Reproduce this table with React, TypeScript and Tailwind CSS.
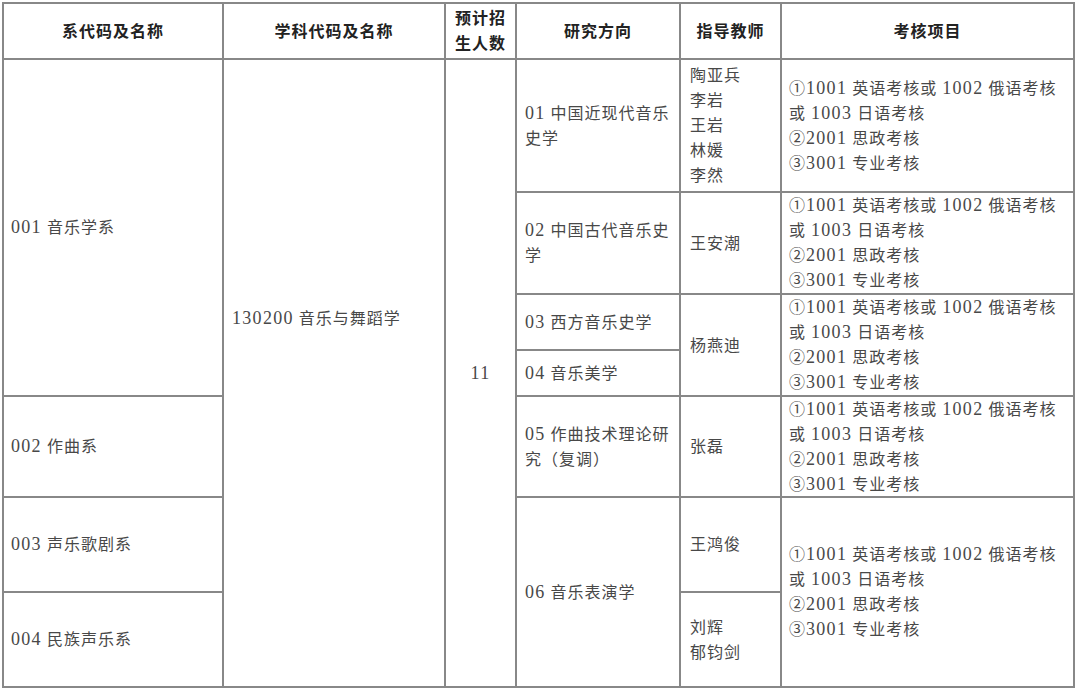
import React from "react";

const exam = [
  "①1001 英语考核或 1002 俄语考核",
  "或 1003 日语考核",
  "②2001 思政考核",
  "③3001 专业考核",
];

// digits in the source are set larger than the CJK characters
function T({ s }: { s: string }) {
  const parts = s.split(/([0-9]+)/);
  return (
    <>
      {parts.map((p, i) =>
        /^[0-9]+$/.test(p) ? (
          <span key={i} className="text-[18px] tracking-[1.3px]">
            {p}
          </span>
        ) : (
          <React.Fragment key={i}>{p}</React.Fragment>
        )
      )}
    </>
  );
}

function Lines({ lines }: { lines: string[] }) {
  return (
    <>
      {lines.map((l, i) => (
        <div key={i} className="whitespace-nowrap">
          <T s={l} />
        </div>
      ))}
    </>
  );
}

function Cell({
  className = "",
  children,
}: {
  className?: string;
  children?: React.ReactNode;
}) {
  return (
    <div className={`bg-white flex flex-col justify-center ${className}`}>
      {children}
    </div>
  );
}

const head = "items-center font-bold text-[#222] tracking-[1px]";

export default function App() {
  return (
    <div
      className="w-[1080px] h-[694px] bg-white pt-[2px] pl-[2px]"
      style={{ fontFamily: '"Liberation Serif", "Noto Sans CJK SC", serif' }}
    >
      <div className="grid w-[1073px] grid-cols-[218px_220px_69px_162px_99px_291px] grid-rows-[54px_131px_100px_54px_44px_99px_93px_93px] gap-[2px] bg-[#888888] p-[2px] text-[16px] leading-[25px] text-[#484848] tracking-[1px]">
        {/* header */}
        <Cell className={head}>系代码及名称</Cell>
        <Cell className={head}>学科代码及名称</Cell>
        <Cell className={head}>
          <div>预计招</div>
          <div>生人数</div>
        </Cell>
        <Cell className={head}>研究方向</Cell>
        <Cell className={head}>指导教师</Cell>
        <Cell className={head}>考核项目</Cell>

        {/* column 1 */}
        <Cell className="col-start-1 row-start-2 row-span-4 pl-[7px]">
          <Lines lines={["001 音乐学系"]} />
        </Cell>
        <Cell className="col-start-1 row-start-6 pl-[7px]">
          <Lines lines={["002 作曲系"]} />
        </Cell>
        <Cell className="col-start-1 row-start-7 pl-[7px]">
          <Lines lines={["003 声乐歌剧系"]} />
        </Cell>
        <Cell className="col-start-1 row-start-8 pl-[7px]">
          <Lines lines={["004 民族声乐系"]} />
        </Cell>

        {/* column 2 */}
        <Cell className="col-start-2 row-start-2 row-span-7 pl-[8px] pb-[110px]">
          <Lines lines={["130200 音乐与舞蹈学"]} />
        </Cell>

        {/* column 3 */}
        <Cell className="col-start-3 row-start-2 row-span-7 items-center">
          <Lines lines={["11"]} />
        </Cell>

        {/* column 4 */}
        <Cell className="col-start-4 row-start-2 pl-[8px]">
          <Lines lines={["01 中国近现代音乐", "史学"]} />
        </Cell>
        <Cell className="col-start-4 row-start-3 pl-[8px]">
          <Lines lines={["02 中国古代音乐史", "学"]} />
        </Cell>
        <Cell className="col-start-4 row-start-4 pl-[8px]">
          <Lines lines={["03 西方音乐史学"]} />
        </Cell>
        <Cell className="col-start-4 row-start-5 pl-[8px]">
          <Lines lines={["04 音乐美学"]} />
        </Cell>
        <Cell className="col-start-4 row-start-6 pl-[8px]">
          <Lines lines={["05 作曲技术理论研", "究（复调）"]} />
        </Cell>
        <Cell className="col-start-4 row-start-7 row-span-2 pl-[8px]">
          <Lines lines={["06 音乐表演学"]} />
        </Cell>

        {/* column 5 */}
        <Cell className="col-start-5 row-start-2 pl-[9px]">
          <Lines lines={["陶亚兵", "李岩", "王岩", "林媛", "李然"]} />
        </Cell>
        <Cell className="col-start-5 row-start-3 pl-[9px]">王安潮</Cell>
        <Cell className="col-start-5 row-start-4 row-span-2 pl-[9px]">杨燕迪</Cell>
        <Cell className="col-start-5 row-start-6 pl-[9px]">张磊</Cell>
        <Cell className="col-start-5 row-start-7 pl-[9px]">王鸿俊</Cell>
        <Cell className="col-start-5 row-start-8 pl-[9px]">
          <Lines lines={["刘辉", "郁钧剑"]} />
        </Cell>

        {/* column 6 */}
        <Cell className="col-start-6 row-start-2 pl-[7px]">
          <Lines lines={exam} />
        </Cell>
        <Cell className="col-start-6 row-start-3 pl-[7px]">
          <Lines lines={exam} />
        </Cell>
        <Cell className="col-start-6 row-start-4 row-span-2 pl-[7px]">
          <Lines lines={exam} />
        </Cell>
        <Cell className="col-start-6 row-start-6 pl-[7px]">
          <Lines lines={exam} />
        </Cell>
        <Cell className="col-start-6 row-start-7 row-span-2 pl-[7px]">
          <Lines lines={exam} />
        </Cell>
      </div>
    </div>
  );
}
